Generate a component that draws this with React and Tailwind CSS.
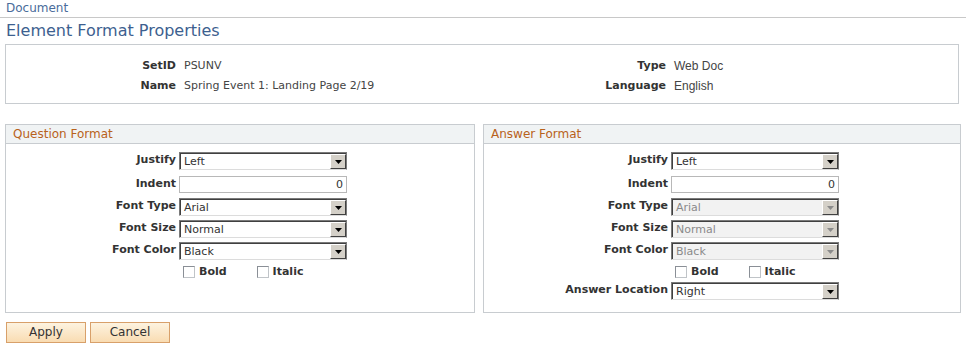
import React from 'react'

const verdana = { fontFamily: '"DejaVu Sans", Verdana, sans-serif' }
const arial = { fontFamily: '"Liberation Sans", Arial, sans-serif' }

function Arrow({ disabled }) {
  return (
    <div className="flex w-[16px] items-center justify-center border-t border-l border-b border-r border-t-white border-l-white border-b-[#404040] border-r-[#404040] bg-[#d4d0c8]">
      <svg width="7" height="4" viewBox="0 0 7 4">
        <path d="M0 0h7L3.5 4z" fill={disabled ? '#8a8a8a' : '#000'} />
      </svg>
    </div>
  )
}

function Select({ value, disabled }) {
  return (
    <div className="h-[18px] w-[168px] border-t border-l border-r border-b border-t-[#7a7a7a] border-l-[#7a7a7a] border-r-[#7a7a7a] border-b-[#dcdcdc]">
      <div
        className={
          disabled
            ? 'flex h-full items-stretch border-t border-l border-t-[#404040] border-l-[#404040] bg-[#f2f2f2]'
            : 'flex h-full items-stretch border-t border-l border-t-[#404040] border-l-[#404040] bg-white'
        }
      >
        <span
          className={
            disabled
              ? 'flex-1 pl-[3px] text-[11px] leading-[15px] text-[#8a8a8a]'
              : 'flex-1 pl-[3px] text-[11px] leading-[15px] text-[#333]'
          }
          style={verdana}
        >
          {value}
        </span>
        <Arrow disabled={disabled} />
      </div>
    </div>
  )
}

function Input({ value }) {
  return (
    <div
      className="h-[17px] w-[168px] border border-[#b8b8b8] bg-white pr-[3px] text-right text-[11px] leading-[15px] text-[#333]"
      style={verdana}
    >
      {value}
    </div>
  )
}

function Row({ label, labelW, children, mt }) {
  return (
    <div className={`flex items-start gap-[3px] ${mt}`}>
      <div
        className="pt-[1px] text-right text-[11px] font-bold leading-[14px] text-[#333]"
        style={{ ...verdana, width: labelW }}
      >
        {label}
      </div>
      {children}
    </div>
  )
}

function Check({ label }) {
  return (
    <div className="flex items-center gap-[4px]">
      <div className="h-[12px] w-[12px] border border-[#8a8f96] border-b-[#c0c4c8] border-r-[#c0c4c8] bg-white" />
      <span className="text-[11px] font-bold leading-[14px] text-[#333]" style={verdana}>
        {label}
      </span>
    </div>
  )
}

function Panel({ title, width, labelW, answer }) {
  return (
    <div className="h-[189px] border border-[#c8ccd0]" style={{ width }}>
      <div
        className="h-[19px] border-b border-[#c8ccd0] bg-[#f0f3f4] pl-[7px] text-[12px] leading-[18px] text-[#b8621b]"
        style={verdana}
      >
        {title}
      </div>
      <div className="pt-[8px]">
        <Row label="Justify" labelW={labelW} mt="">
          <Select value="Left" />
        </Row>
        <Row label="Indent" labelW={labelW} mt="mt-[6px]">
          <Input value="0" />
        </Row>
        <Row label="Font Type" labelW={labelW} mt="mt-[5px]">
          <Select value="Arial" disabled={answer} />
        </Row>
        <Row label="Font Size" labelW={labelW} mt="mt-[4px]">
          <Select value="Normal" disabled={answer} />
        </Row>
        <Row label="Font Color" labelW={labelW} mt="mt-[4px]">
          <Select value="Black" disabled={answer} />
        </Row>
        <div className="mt-[5px] flex gap-[30px]" style={{ paddingLeft: labelW + 7 }}>
          <Check label="Bold" />
          <Check label="Italic" />
        </div>
        {answer && (
          <Row label="Answer Location" labelW={labelW} mt="mt-[3px]">
            <Select value="Right" />
          </Row>
        )}
      </div>
    </div>
  )
}

export default function App() {
  return (
    <div className="h-[350px] w-[966px] bg-white text-[#333]">
      <div className="border-b border-[#c8c8c8] pl-[6px] text-[12px] leading-[16px] text-[#4a6c9b]" style={verdana}>
        <div className="pb-[1px]">Document</div>
      </div>
      <div className="pl-[6px] pt-[2px] text-[16px] leading-[22px] text-[#3d5f8f]" style={verdana}>
        Element Format Properties
      </div>
      <div className="ml-[5px] mt-[2px] flex h-[60px] w-[954px] flex-col gap-[6px] border border-[#c8ccd0] pt-[14px]">
        <div className="flex">
          <div className="flex w-[490px] gap-[8px]">
            <span className="w-[170px] text-right text-[11px] font-bold leading-[14px]" style={verdana}>SetID</span>
            <span className="text-[11px] leading-[14px] text-[#444]" style={verdana}>PSUNV</span>
          </div>
          <div className="flex gap-[8px]">
            <span className="w-[170px] text-right text-[11px] font-bold leading-[14px]" style={verdana}>Type</span>
            <span className="text-[12px] leading-[14px] text-[#444]" style={arial}>Web Doc</span>
          </div>
        </div>
        <div className="flex">
          <div className="flex w-[490px] gap-[8px]">
            <span className="w-[170px] text-right text-[11px] font-bold leading-[14px]" style={verdana}>Name</span>
            <span className="text-[11px] leading-[14px] text-[#444]" style={verdana}>Spring Event 1: Landing Page 2/19</span>
          </div>
          <div className="flex gap-[8px]">
            <span className="w-[170px] text-right text-[11px] font-bold leading-[14px]" style={verdana}>Language</span>
            <span className="text-[12px] leading-[14px] text-[#444]" style={arial}>English</span>
          </div>
        </div>
      </div>
      <div className="ml-[5px] mt-[20px] flex gap-[8px]">
        <Panel title="Question Format" width={470} labelW={170} />
        <Panel title="Answer Format" width={478} labelW={184} answer />
      </div>
      <div className="ml-[6px] mt-[9px] flex gap-[4px]">
        {['Apply', 'Cancel'].map((t) => (
          <button
            key={t}
            className="h-[21px] w-[80px] border border-[#d8a06a] bg-gradient-to-b from-[#fdf3e0] to-[#f9dcb2] text-[12px] leading-[19px] text-[#333]"
            style={verdana}
          >
            {t}
          </button>
        ))}
      </div>
    </div>
  )
}
